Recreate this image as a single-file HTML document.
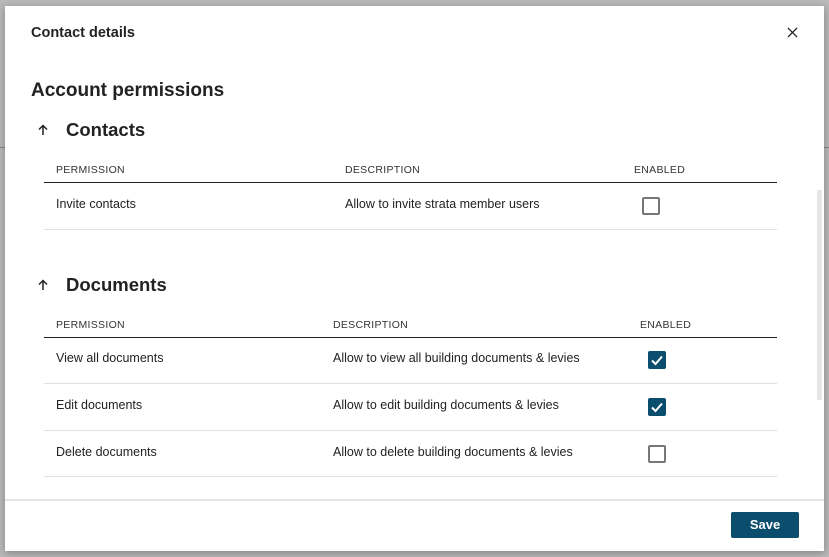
<!DOCTYPE html>
<html><head><meta charset="utf-8"><style>
*{margin:0;padding:0;box-sizing:border-box}
body{width:829px;height:557px;overflow:hidden;background:#b9b9b9;font-family:"Liberation Sans",sans-serif;color:#1d1d1d;position:relative}
.bgline{position:absolute;height:1px;background:#888}
.modal{position:absolute;left:5px;top:6px;width:819px;height:545px;background:#fff;box-shadow:0 2px 8px rgba(0,0,0,.3)}
.a{position:absolute;white-space:nowrap}
.h{font-size:14.5px;font-weight:bold;color:#222}
.hl{font-size:12px;color:#333;letter-spacing:.3px}
.t{font-size:12.5px;color:#222}
.line{position:absolute;height:1px;background:#e0e0e0}
.dark{background:#222}
.cb{position:absolute;width:18px;height:18px;border:2px solid #777;border-radius:2px}
.cbc{position:absolute;width:18px;height:18px;background:#0b4d6c;border-radius:2px}
</style></head><body>
<div class="bgline" style="left:0;top:147px;width:5px"></div>
<div class="bgline" style="left:824px;top:147px;width:5px"></div>
<div class="modal">
<div class="a h" style="left:26px;top:19px;font-size:14.5px">Contact details</div>
<svg class="a" style="left:782px;top:21px" width="11" height="11" viewBox="0 0 12 12"><path d="M1 1L11 11M11 1L1 11" stroke="#222" stroke-width="1.4"/></svg>
<div class="a" style="left:26px;top:74px;font-size:19px;font-weight:bold;color:#222">Account permissions</div>

<svg class="a" style="left:33px;top:118px" width="10" height="12" viewBox="0 0 10 12"><path d="M5 11V1.5M1 5.5L5 1.5L9 5.5" stroke="#222" stroke-width="1.5" fill="none"/></svg>
<div class="a" style="left:61px;top:113px;font-size:18.5px;font-weight:bold;color:#222">Contacts</div>
<div class="a hl" style="left:51px;top:158px;font-size:10.5px">PERMISSION</div>
<div class="a hl" style="left:340px;top:158px;font-size:10.5px">DESCRIPTION</div>
<div class="a hl" style="left:629px;top:158px;font-size:10.5px">ENABLED</div>
<div class="line dark" style="left:39px;top:176px;width:733px"></div>
<div class="a t" style="left:51px;top:191px">Invite contacts</div>
<div class="a t" style="left:340px;top:191px">Allow to invite strata member users</div>
<div class="cb" style="left:637px;top:191px"></div>
<div class="line" style="left:39px;top:223px;width:733px"></div>

<svg class="a" style="left:33px;top:273px" width="10" height="12" viewBox="0 0 10 12"><path d="M5 11V1.5M1 5.5L5 1.5L9 5.5" stroke="#222" stroke-width="1.5" fill="none"/></svg>
<div class="a" style="left:61px;top:268px;font-size:18.5px;font-weight:bold;color:#222">Documents</div>
<div class="a hl" style="left:51px;top:313px;font-size:10.5px">PERMISSION</div>
<div class="a hl" style="left:328px;top:313px;font-size:10.5px">DESCRIPTION</div>
<div class="a hl" style="left:635px;top:313px;font-size:10.5px">ENABLED</div>
<div class="line dark" style="left:39px;top:331px;width:733px"></div>
<div class="a t" style="left:51px;top:345px">View all documents</div>
<div class="a t" style="left:328px;top:345px">Allow to view all building documents &amp; levies</div>
<div class="cbc" style="left:643px;top:345px"><svg width="18" height="18" viewBox="0 0 18 18"><path d="M4 9.5L7.5 13L14 5.5" stroke="#fff" stroke-width="2" fill="none"/></svg></div>
<div class="line" style="left:39px;top:377px;width:733px"></div>
<div class="a t" style="left:51px;top:392px">Edit documents</div>
<div class="a t" style="left:328px;top:392px">Allow to edit building documents &amp; levies</div>
<div class="cbc" style="left:643px;top:392px"><svg width="18" height="18" viewBox="0 0 18 18"><path d="M4 9.5L7.5 13L14 5.5" stroke="#fff" stroke-width="2" fill="none"/></svg></div>
<div class="line" style="left:39px;top:424px;width:733px"></div>
<div class="a t" style="left:51px;top:439px">Delete documents</div>
<div class="a t" style="left:328px;top:439px">Allow to delete building documents &amp; levies</div>
<div class="cb" style="left:643px;top:439px"></div>
<div class="line" style="left:39px;top:470px;width:733px"></div>

<div class="a" style="left:812px;top:184px;width:5px;height:210px;background:#e6e6e6"></div>
<div class="line" style="left:0;top:493px;width:819px;height:2px;background:#e4e4e4"></div>
<div class="a" style="left:726px;top:506px;width:68px;height:26px;background:#0b4d6c;border-radius:2px;color:#fff;font-weight:bold;font-size:13px;text-align:center;line-height:26px">Save</div>
</div>
</body></html>
